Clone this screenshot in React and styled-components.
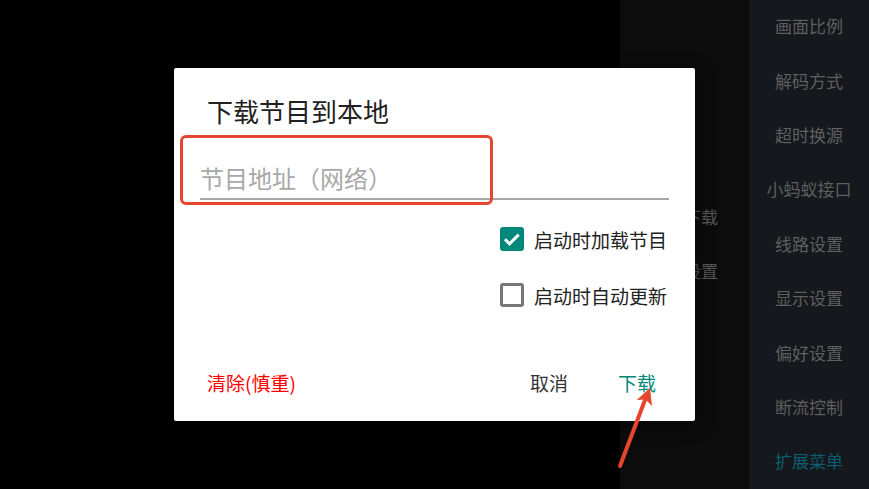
import styled, { createGlobalStyle } from "styled-components";

const GlobalStyle = createGlobalStyle`
  html, body {
    margin: 0;
    padding: 0;
    background: #000;
  }
  body {
    font-family: "Noto Sans CJK SC", "Noto Sans", sans-serif;
  }
`;

const Screen = styled.div`
  position: relative;
  width: 869px;
  height: 489px;
  overflow: hidden;
  display: grid;
  grid-template-columns: 620px 129px 120px;
  background: #000;
`;

const Stage = styled.div`
  background: #000;
`;

const SubPanel = styled.div`
  background: #0c0c0c;
  display: flex;
  flex-direction: column;
  justify-content: center;
`;

const SubItem = styled.div`
  height: 54.4px;
  display: flex;
  align-items: center;
  justify-content: flex-end;
  padding-right: 31px;
  font-size: 17px;
  line-height: 20px;
  padding-bottom: 2px;
  box-sizing: border-box;
  color: #575757;
`;

const SideMenu = styled.div`
  background: #15181d;
  display: flex;
  flex-direction: column;
`;

const MenuItem = styled.div`
  box-sizing: border-box;
  height: 54.4px;
  padding-bottom: 2px;
  display: flex;
  align-items: center;
  justify-content: center;
  font-size: 17px;
  line-height: 20px;
  white-space: nowrap;
  color: ${(p) => (p.active ? "#0b5f70" : "#5f5f5f")};
`;

const Overlay = styled.div`
  position: absolute;
  inset: 0;
  display: flex;
  align-items: center;
  justify-content: center;
`;

const Dialog = styled.div`
  box-sizing: border-box;
  width: 521px;
  height: 353px;
  background: #fff;
  border-radius: 2px;
  box-shadow: 0 4px 18px rgba(0, 0, 0, 0.5);
  padding: 26px 26px 19px;
  display: flex;
  flex-direction: column;
`;

const Title = styled.div`
  font-size: 26px;
  line-height: 34px;
  padding-left: 7px;
  color: #212121;
`;

const Field = styled.div`
  position: relative;
  margin-top: 32px;
`;

const Input = styled.input`
  box-sizing: border-box;
  width: 100%;
  border: none;
  border-bottom: 2px solid #a6a6a6;
  outline: none;
  padding: 0 0 4px;
  font-family: inherit;
  font-size: 24px;
  line-height: 34px;
  height: 40px;
  color: #212121;
  background: transparent;

  &::placeholder {
    color: #a8a8a8;
  }
`;

const Highlight = styled.div`
  position: absolute;
  left: -20px;
  top: -25px;
  width: 313px;
  height: 70px;
  box-sizing: border-box;
  border: 3px solid #e8452f;
  border-radius: 6px;
  pointer-events: none;
`;

const Options = styled.div`
  margin-top: 11px;
  display: flex;
  flex-direction: column;
  align-items: flex-end;
  padding-right: 2px;
`;

const OptionRow = styled.label`
  height: 56px;
  display: flex;
  align-items: center;
  gap: 10px;
  font-size: 19px;
  color: #212121;
`;

const Box = styled.span`
  box-sizing: border-box;
  width: 24px;
  height: 24px;
  border-radius: 3px;
  display: flex;
  align-items: center;
  justify-content: center;
  background: ${(p) => (p.checked ? "#00897b" : "#fff")};
  border: ${(p) => (p.checked ? "none" : "3px solid #777777")};
`;

const Actions = styled.div`
  margin-top: auto;
  height: 38px;
  display: flex;
  align-items: center;
`;

const Spacer = styled.div`
  flex: 1;
`;

const ActionButton = styled.button`
  border: none;
  background: none;
  font-family: inherit;
  font-size: 19px;
  line-height: 38px;
  padding: 0 ${(p) => (p.tight ? "7px" : "13px")};
  margin-left: ${(p) => (p.gap ? "24px" : "0")};
  color: ${(p) => p.color};
  cursor: pointer;
`;

const Arrow = styled.svg`
  position: absolute;
  left: 600px;
  top: 370px;
  pointer-events: none;
`;

const menu = [
  "画面比例",
  "解码方式",
  "超时换源",
  "小蚂蚁接口",
  "线路设置",
  "显示设置",
  "偏好设置",
  "断流控制",
  "扩展菜单",
];

const Checkbox = ({ checked }) => (
  <Box checked={checked}>
    {checked && (
      <svg width="24" height="24" viewBox="0 0 24 24">
        <path
          d="M5 12.3l4.5 4.5 9.2-9.2"
          fill="none"
          stroke="#fff"
          strokeWidth="3"
        />
      </svg>
    )}
  </Box>
);

const App = () => {
  return (
    <>
      <GlobalStyle />
      <Screen>
        <Stage />
        <SubPanel>
          <SubItem>节目下载</SubItem>
          <SubItem>其他设置</SubItem>
        </SubPanel>
        <SideMenu>
          {menu.map((m, i) => (
            <MenuItem key={m} active={i === menu.length - 1}>
              {m}
            </MenuItem>
          ))}
        </SideMenu>

        <Overlay>
          <Dialog>
            <Title>下载节目到本地</Title>
            <Field>
              <Input placeholder="节目地址（网络）" />
              <Highlight />
            </Field>
            <Options>
              <OptionRow>
                <Checkbox checked />
                启动时加载节目
              </OptionRow>
              <OptionRow>
                <Checkbox />
                启动时自动更新
              </OptionRow>
            </Options>
            <Actions>
              <ActionButton tight color="#ff0000">
                清除(慎重)
              </ActionButton>
              <Spacer />
              <ActionButton color="#333333">取消</ActionButton>
              <ActionButton gap color="#00897b">
                下载
              </ActionButton>
            </Actions>
          </Dialog>
        </Overlay>

        <Arrow width="70" height="110" viewBox="0 0 70 110">
          <line
            x1="20"
            y1="96"
            x2="45"
            y2="30"
            stroke="#e8452f"
            strokeWidth="4"
            strokeLinecap="round"
          />
          <polygon points="50,18 52,36 45.7,29.5 36.8,30" fill="#e8452f" />
        </Arrow>
      </Screen>
    </>
  );
};

export default App;
